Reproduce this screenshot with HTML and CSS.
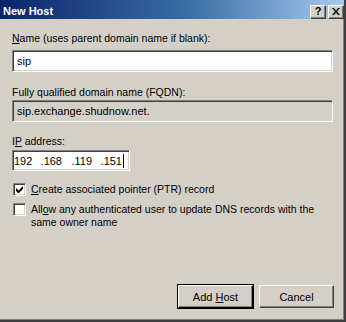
FILE: index.html
```html
<!DOCTYPE html>
<html lang="en">

<head>
    <meta charset="UTF-8">
    <title>New Host</title>
    <link rel="stylesheet" href="styles.css">
</head>

<body>
    <div class="window">
        <div class="titlebar">
            <span class="title">New Host</span>
            <div class="title-buttons">
                <span class="tbtn">?</span>
                <span class="tbtn">
                    <svg width="8" height="7" viewBox="0 0 8 7">
                        <path d="M0 0h2l2 2.5L6 0h2L5 3.5 8 7H6L4 4.5 2 7H0l3-3.5z" fill="#000" />
                    </svg>
                </span>
            </div>
        </div>

        <div class="content">
            <label class="field-label"><u>N</u>ame (uses parent domain name if blank):</label>
            <div class="textbox">sip</div>

            <label class="field-label fqdn-label">Fully qualified domain name (FQDN):</label>
            <div class="textbox readonly">sip.exchange.shudnow.net.</div>

            <label class="field-label ip-label">I<u>P</u> address:</label>
            <div class="textbox ipbox">
                <span class="octet first">192</span><span class="octet">.168</span><span class="octet">.119</span><span class="octet">.151</span><span class="caret"></span>
            </div>

            <div class="check-row first">
                <span class="checkbox">
                    <svg width="7" height="7" viewBox="0 0 7 7">
                        <path d="M0 2v3l2 2h1l4-4V0L2.5 4.5z" fill="#000" />
                    </svg>
                </span>
                <span class="check-text"><u>C</u>reate associated pointer (PTR) record</span>
            </div>
            <div class="check-row">
                <span class="checkbox"></span>
                <span class="check-text">All<u>o</u>w any authenticated user to update DNS records with the same owner name</span>
            </div>

            <div class="buttons">
                <button type="button" class="default">Add <u>H</u>ost</button>
                <button type="button">Cancel</button>
            </div>
        </div>
    </div>
</body>

</html>
```

FILE: styles.css
```css
body {
    margin: 0;
    font-family: "Liberation Sans", Arial, sans-serif;
    font-size: 10.5px;
    color: #000;
    background-color: #d4d0c8;
}

.window {
    width: 346px;
    height: 322px;
    box-sizing: border-box;
    background-color: #d4d0c8;
    border-right: 2px solid #404040;
    border-bottom: 2px solid #404040;
    box-shadow: inset -1px -1px #808080;
    display: flex;
    flex-direction: column;
    overflow: hidden;
}

.titlebar {
    height: 19px;
    flex-shrink: 0;
    background: linear-gradient(to right, #0a246a, #3a6ea5 55%, #a6caf0);
    display: flex;
    align-items: center;
    justify-content: space-between;
    padding-left: 3px;
}

.title {
    color: #fff;
    font-weight: bold;
    font-size: 11px;
    margin-top: 2px;
}

.title-buttons {
    display: flex;
    gap: 2px;
    margin-top: 4px;
}

.tbtn {
    width: 16px;
    height: 14px;
    box-sizing: border-box;
    background-color: #d4d0c8;
    border: 1px solid;
    border-color: #fff #404040 #404040 #fff;
    box-shadow: inset -1px -1px #808080;
    display: flex;
    align-items: center;
    justify-content: center;
    font-weight: bold;
    font-size: 11px;
    line-height: 1;
}

.content {
    flex: 1;
    padding: 13px 11px 0 12px;
    display: flex;
    flex-direction: column;
}

.field-label {
    display: block;
    line-height: 13px;
}

.fqdn-label {
    margin-top: 14px;
}

.ip-label {
    margin-top: 13px;
}

.textbox {
    margin-top: 5px;
    height: 22px;
    box-sizing: border-box;
    background-color: #fff;
    border: 1px solid;
    border-color: #808080 #fff #fff #808080;
    box-shadow: inset 1px 1px #404040, inset -1px -1px #d4d0c8;
    padding: 0 4px;
    display: flex;
    align-items: center;
    font-size: 11px;
}

.fqdn-label + .textbox {
    margin-top: 1px;
}

.textbox.readonly {
    background-color: #d4d0c8;
}

.ipbox {
    width: 118px;
    height: 21px;
    padding: 0 0 0 1px;
    margin-top: 2px;
}

.octet {
    width: 30px;
    text-align: right;
}

.octet.first {
    width: 18px;
}

.caret {
    width: 1px;
    height: 14px;
    background-color: #000;
    margin-left: 1px;
}

.check-row {
    display: flex;
    align-items: flex-start;
    gap: 5px;
    margin-top: 7px;
    padding-left: 1px;
}

.check-row.first {
    margin-top: 12px;
}

.checkbox {
    width: 13px;
    height: 13px;
    flex-shrink: 0;
    box-sizing: border-box;
    background-color: #fff;
    border: 1px solid;
    border-color: #808080 #fff #fff #808080;
    box-shadow: inset 1px 1px #404040, inset -1px -1px #d4d0c8;
    display: flex;
    align-items: center;
    justify-content: center;
}

.check-text {
    line-height: 13px;
}

.buttons {
    margin-top: auto;
    margin-bottom: 12px;
    margin-right: -1px;
    display: flex;
    justify-content: flex-end;
    gap: 6px;
}

button {
    width: 75px;
    height: 23px;
    box-sizing: border-box;
    background-color: #d4d0c8;
    border: 1px solid;
    border-color: #fff #404040 #404040 #fff;
    box-shadow: inset -1px -1px #808080;
    font-family: inherit;
    font-size: 11px;
    color: #000;
    padding: 0;
}

button.default {
    outline: 1px solid #000;
    outline-offset: 0;
    border-color: #fff #000 #000 #fff;
}
```
